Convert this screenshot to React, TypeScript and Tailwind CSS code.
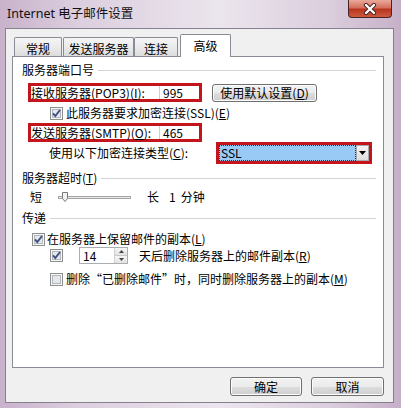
import React from "react";

const btn =
  "flex items-center justify-center rounded-[3px] border border-[#707070] bg-[linear-gradient(180deg,#f2f2f2_0%,#ebebeb_50%,#dddddd_51%,#cfcfcf_100%)] shadow-[inset_0_0_0_1px_#fcfcfc]";

function Check({ checked }: { checked?: boolean }) {
  return (
    <svg width="13" height="13" viewBox="0 0 13 13" className="shrink-0">
      <rect x="0.5" y="0.5" width="12" height="12" fill="#f6f6f6" stroke="#8e8f8f" />
      <rect x="2.5" y="2.5" width="8" height="8" fill="#e4e7eb" stroke="#b4b8bd" />
      {checked && (
        <path d="M3 6.3 L5.3 9 L10 3" fill="none" stroke="#3d4f82" strokeWidth="1.9" />
      )}
    </svg>
  );
}

function U({ k }: { k: string }) {
  return (
    <>
      (<span className="underline">{k}</span>)
    </>
  );
}

function Group({ label }: { label: React.ReactNode }) {
  return (
    <div className="flex items-center h-4 pl-[9px] pr-[7px] gap-[4px]">
      <span className="whitespace-nowrap">{label}</span>
      <div className="flex-1 h-px bg-[#d0d5d9]" />
    </div>
  );
}

function RedField({ label, value }: { label: React.ReactNode; value: string }) {
  return (
    <div className="w-[174px] h-[19px] border-[3px] border-[#c4151c] flex items-center">
      <span className="w-[128px] whitespace-nowrap leading-[13px]">{label}</span>
      <div className="flex-1 h-full border-l border-[#cfcfcf] bg-white pl-[3px] leading-[13px]">{value}</div>
    </div>
  );
}

export default function App() {
  const tab = "h-[19px] border border-b-0 border-[#898c95] rounded-t-[2px] bg-[linear-gradient(180deg,#f5f5f5_0%,#ebebeb_50%,#dcdcdc_100%)] flex justify-center pt-[3px]";
  return (
    <div className="w-[401px] h-[408px] overflow-hidden bg-[linear-gradient(90deg,#c9b2cb_0%,#dccfdf_20%,#ebe5ed_55%,#dbcedd_82%,#c6b0c9_100%)] font-['Noto_Sans_CJK_SC',sans-serif] text-[12px] leading-[16px] text-black">
      <div className="h-[28px] flex justify-between items-start">
        <div className="pl-[7px] pt-[6px] font-['Noto_Sans','Noto_Sans_CJK_SC',sans-serif] text-[12.5px] leading-[16px] text-[#111]">
          Internet 电子邮件设置
        </div>
        <div className="mr-[9px] w-[44px] h-[18px] rounded-b-[4px] border border-t-0 border-[#4a2424] bg-[linear-gradient(180deg,#e9a99b_0%,#d5705e_45%,#b8351f_55%,#cc5a40_100%)] flex items-center justify-center">
          <svg width="14" height="12" viewBox="0 0 14 12">
            <path d="M3 2 L11 10 M11 2 L3 10" stroke="#4a2020" strokeWidth="4.2" strokeLinecap="round" />
            <path d="M3 2 L11 10 M11 2 L3 10" stroke="#ffffff" strokeWidth="2.4" strokeLinecap="round" />
          </svg>
        </div>
      </div>

      <div className="ml-[5px] w-[389px] h-[375px] border border-[#85808c] bg-[#f0f0f0] flex flex-col pt-[5px]">
        <div className="flex items-end h-[22px] pl-[8px] relative z-10">
          <div className={`${tab} w-[48px]`}>常规</div>
          <div className={`${tab} w-[71px] ml-px`}>发送服务器</div>
          <div className={`${tab} w-[44px]`}>连接</div>
          <div className="ml-[2px] w-[51px] h-[23px] -mb-px border border-b-0 border-[#898c95] rounded-t-[2px] bg-white flex justify-center pt-[3px]">
            高级
          </div>
        </div>

        <div className="ml-[6px] w-[372px] h-[312px] border border-[#898c95] bg-white flex flex-col pt-[5px]">
          <Group label="服务器端口号" />

          <div className="mt-[5px] flex items-center pl-[15px] h-[19px]">
            <RedField label={<>接收服务器(POP3)<U k="I" />:</>} value="995" />
            <div className={`${btn} ml-[10px] w-[105px] h-[18px]`}>
              使用默认设置<U k="D" />
            </div>
          </div>

          <div className="mt-[3px] h-4 flex items-center pl-[37px] gap-[3px]">
            <Check checked />
            <span>此服务器要求加密连接(SSL)<U k="E" /></span>
          </div>

          <div className="mt-[2px] flex items-center pl-[15px] h-[19px]">
            <RedField label={<>发送服务器(SMTP)<U k="O" />:</>} value="465" />
          </div>

          <div className="h-[22px] flex items-center pl-[36px]">
            <span className="w-[167px] whitespace-nowrap">使用以下加密连接类型<U k="C" />:</span>
            <div className="w-[156px] h-[22px] border-[3px] border-[#c4151c] flex">
              <div className="flex-1 bg-[#99c9f5] border border-dotted border-[#333] leading-[14px] pl-px">SSL</div>
              <div className="w-[13px] border border-[#a9a9a9] bg-[linear-gradient(180deg,#f4f4f4_0%,#dedede_100%)] flex items-center justify-center">
                <svg width="7" height="4" viewBox="0 0 7 4">
                  <path d="M0 0 H7 L3.5 4 Z" fill="#000" />
                </svg>
              </div>
            </div>
          </div>

          <div className="mt-[6px]">
            <Group label={<>服务器超时<U k="T" /></>} />
          </div>

          <div className="mt-[3px] h-4 flex items-center pl-[17px]">
            <span>短</span>
            <svg width="74" height="12" viewBox="0 0 74 12" className="ml-[16px]">
              <rect x="0.5" y="5.5" width="72" height="2" fill="#e8e8e8" stroke="#a6a6a6" />
              <path d="M4.5 1.5 H9.5 V7.5 L7 10.5 L4.5 7.5 Z" fill="#f2f2f2" stroke="#7a7a7a" />
            </svg>
            <span className="ml-[15px]">长</span>
            <span className="ml-[10px]">1</span>
            <span className="ml-[5px]">分钟</span>
          </div>

          <div className="mt-[5px]">
            <Group label="传递" />
          </div>

          <div className="mt-[5px] h-4 flex items-center pl-[19px] gap-[2px]">
            <Check checked />
            <span>在服务器上保留邮件的副本<U k="L" /></span>
          </div>

          <div className="h-[17px] flex items-center pl-[37px]">
            <Check checked />
            <div className="ml-[16px] w-[49px] h-[17px] border border-[#abadb3] bg-white flex">
              <div className="flex-1 pl-[3px] leading-[15px]">14</div>
              <div className="w-[13px] flex flex-col border-l border-[#d0d0d0]">
                <div className="flex-1 border-b border-[#c8c8c8] bg-[linear-gradient(180deg,#f6f6f6_0%,#e2e2e2_100%)] flex items-center justify-center">
                  <svg width="5" height="3" viewBox="0 0 5 3"><path d="M0 3 H5 L2.5 0 Z" fill="#444" /></svg>
                </div>
                <div className="flex-1 bg-[linear-gradient(180deg,#f6f6f6_0%,#e2e2e2_100%)] flex items-center justify-center">
                  <svg width="5" height="3" viewBox="0 0 5 3"><path d="M0 0 H5 L2.5 3 Z" fill="#444" /></svg>
                </div>
              </div>
            </div>
            <span className="ml-[11px]">天后删除服务器上的邮件副本<U k="R" /></span>
          </div>

          <div className="mt-[7px] h-4 flex items-center pl-[37px] gap-[3px]">
            <Check />
            <span>删除“已删除邮件”时，同时删除服务器上的副本<U k="M" /></span>
          </div>
        </div>

        <div className="mt-[9px] flex justify-end gap-[9px] pr-[9px]">
          <div className={`${btn} w-[72px] h-[19px] border-[#3c7fb1] shadow-[inset_0_0_0_1px_#8fd3f5]`}>确定</div>
          <div className={`${btn} w-[73px] h-[19px]`}>取消</div>
        </div>
      </div>
    </div>
  );
}
